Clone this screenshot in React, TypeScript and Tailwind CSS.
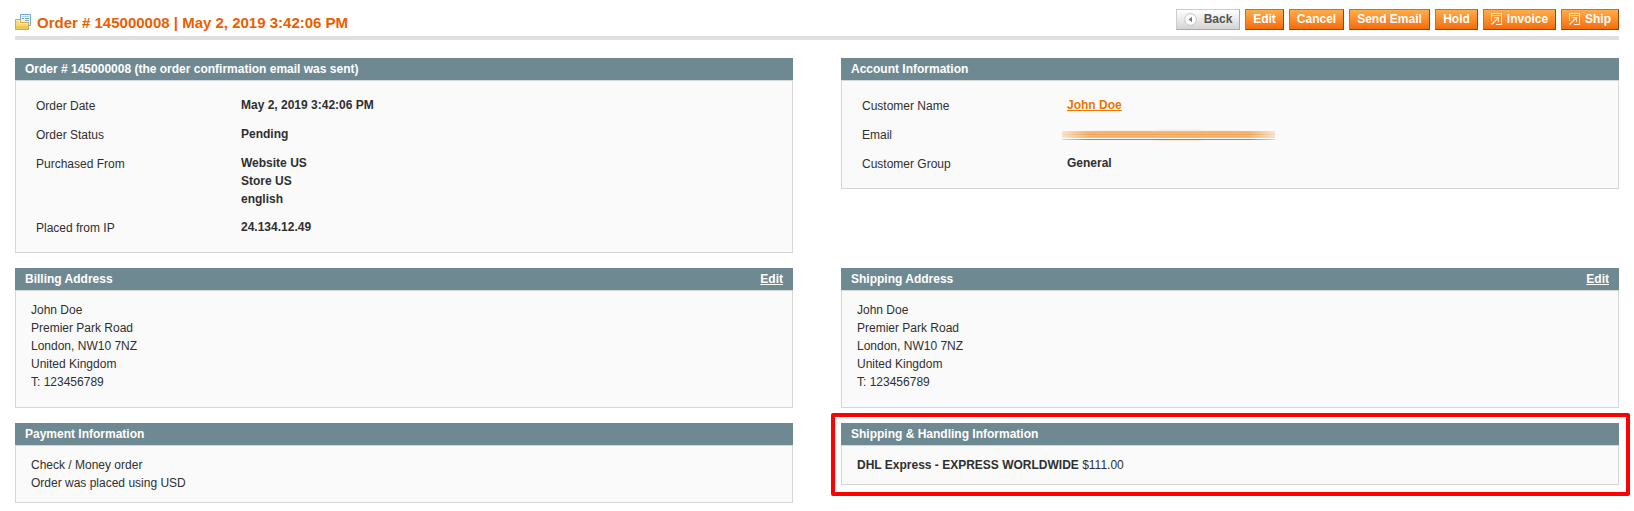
import type { ReactNode } from "react";

function Panel({ title, edit, className, children }: { title: string; edit?: boolean; className: string; children: ReactNode }) {
  return (
    <section>
      <div className="flex h-[22px] justify-between bg-[#6f8992] px-2.5 font-bold leading-[22px] text-white">
        <h4>{title}</h4>
        {edit && <a className="underline">Edit</a>}
      </div>
      <div className={`border border-[#d6d6d6] bg-[#fafafa] ${className}`}>{children}</div>
    </section>
  );
}

function Row({ label, children }: { label: string; children: ReactNode }) {
  return (
    <div className="flex pb-2.5">
      <div className="w-[205px] pt-px">{label}</div>
      <div className="font-bold">{children}</div>
    </div>
  );
}

function Button({ className, children }: { className: string; children: ReactNode }) {
  return (
    <button
      className={`flex h-[21px] items-center justify-center gap-[5px] border border-t-[#ed6502] border-r-[#a04300] border-b-[#a04300] border-l-[#ed6502] bg-linear-to-b from-[#ffac47] to-[#f56b05] pb-0.5 font-bold text-white ${className}`}
    >
      {children}
    </button>
  );
}

function PopIcon() {
  return (
    <svg width="11" height="12" viewBox="0 0 11 12" fill="none" stroke="#ffe9cc" shapeRendering="crispEdges" className="mt-px">
      <path d="M0.5 8V0.5H10.5V11.5H5M1 2.5H10" />
      <path d="M3 4.5H8M7.5 4V9" />
      <path d="M0.5 11.5L7 5" strokeWidth="1.4" shapeRendering="auto" />
    </svg>
  );
}

function OrderIcon() {
  return (
    <svg width="16" height="16" viewBox="0 0 16 16" className="mt-px">
      <path d="M5.5 0.5H15.5V11.5H5.5Z" fill="#e6f1fd" stroke="#7ba6dc" />
      <path d="M7 2.5H14" stroke="#a9cdf3" />
      <path d="M7 4.5H9M10 4.5H14" stroke="#76b15c" />
      <path d="M10 6.5H14M10 8.5H14" stroke="#7ba6dc" />
      <path d="M0.5 15.5V5.5H5.5V8.5H13.5V15.5Z" fill="#f8d673" stroke="#dba443" />
      <path d="M1.5 6.5H4.5V9.5H12.5" fill="none" stroke="#fff3c4" />
      <path d="M1 13.5H13" stroke="#f1c14f" strokeWidth="2" />
    </svg>
  );
}

function Address() {
  return (
    <>
      <p>John Doe</p>
      <p>Premier Park Road</p>
      <p>London, NW10 7NZ</p>
      <p>United Kingdom</p>
      <p>T: 123456789</p>
    </>
  );
}

export default function App() {
  return (
    <main className="h-[511px] overflow-hidden bg-white px-[15px] font-['Liberation_Sans',Arial,sans-serif] text-[12px] leading-[18px] text-[#2f2f2f]">
      <header className="flex h-10 justify-between border-b-4 border-[#dfdfdf]">
        <div className="flex gap-1.5 pt-[13px] text-[#eb5e00]">
          <OrderIcon />
          <h3 className="pt-px text-[15px] leading-[18px] font-bold">Order # 145000008 | May 2, 2019 3:42:06 PM</h3>
        </div>
        <div className="flex gap-[5px] pt-[9px]">
          <button className="flex h-[21px] w-16 items-center justify-center gap-[7px] border border-t-[#ccc] border-r-[#aaa] border-b-[#aaa] border-l-[#ccc] bg-linear-to-b from-white to-[#d4d4d4] pb-0.5 font-bold text-[#555]">
            <svg width="13" height="13" viewBox="0 0 13 13" className="mt-0.5">
              <circle cx="6.5" cy="6.5" r="5.8" fill="#fff" stroke="#c4c4c4" />
              <path d="M8 3.8V9.2L4.5 6.5Z" fill="#777" />
            </svg>
            Back
          </button>
          <Button className="w-[39px]">Edit</Button>
          <Button className="w-[55px]">Cancel</Button>
          <Button className="w-[81px]">Send Email</Button>
          <Button className="w-[43px]">Hold</Button>
          <Button className="w-[73px]"><PopIcon />Invoice</Button>
          <Button className="w-[58px]"><PopIcon />Ship</Button>
        </div>
      </header>

      <div className="grid grid-cols-2 items-start gap-x-12 gap-y-[15px] pt-[18px]">
        <Panel title="Order # 145000008 (the order confirmation email was sent)" className="h-[173px] px-5 pt-[15px]">
          <Row label="Order Date">May 2, 2019 3:42:06 PM</Row>
          <Row label="Order Status">Pending</Row>
          <Row label="Purchased From">
            <p>Website US</p>
            <p>Store US</p>
            <p>english</p>
          </Row>
          <Row label="Placed from IP">24.134.12.49</Row>
        </Panel>
        <Panel title="Account Information" className="h-[109px] px-5 pt-[15px]">
          <Row label="Customer Name"><a className="text-[#ea7601] underline">John Doe</a></Row>
          <Row label="Email">
            <svg width="213" height="12" viewBox="0 0 213 12" className="-ml-[5px] mt-1">
              <defs>
                <linearGradient id="smear">
                  <stop offset="0" stopColor="#ea7601" stopOpacity="0.3" />
                  <stop offset="0.13" stopColor="#ea7601" />
                  <stop offset="0.88" stopColor="#ea7601" />
                  <stop offset="1" stopColor="#ea7601" stopOpacity="0.3" />
                </linearGradient>
              </defs>
              <rect y="9" width="213" height="1" fill="#fff" />
              <g fill="url(#smear)">
                <rect x="92" y="0" width="50" height="1" opacity="0.08" />
                <rect x="30" y="1" width="150" height="1" opacity="0.08" />
                <rect y="2" width="213" height="7" opacity="0.5" />
                <rect y="3" width="213" height="1" opacity="0.12" />
                <rect y="5" width="213" height="1" opacity="0.35" />
                <rect y="7" width="213" height="1" opacity="0.12" />
                <rect y="10" width="213" height="1" />
                <rect x="92" y="11" width="50" height="1" opacity="0.15" />
              </g>
            </svg>
          </Row>
          <Row label="Customer Group">General</Row>
        </Panel>
        <Panel title="Billing Address" edit className="h-[118px] px-[15px] pt-2.5">
          <Address />
        </Panel>
        <Panel title="Shipping Address" edit className="h-[118px] px-[15px] pt-2.5">
          <Address />
        </Panel>
        <Panel title="Payment Information" className="h-[58px] px-[15px] pt-2.5">
          <p>Check / Money order</p>
          <p>Order was placed using USD</p>
        </Panel>
        <div className="relative">
          <Panel title="Shipping &amp; Handling Information" className="h-10 px-[15px] pt-2.5">
            <strong>DHL Express - EXPRESS WORLDWIDE</strong> $111.00
          </Panel>
          <div className="pointer-events-none absolute -top-2.5 -left-2.5 h-[83px] w-[799px] rounded-[2px] border-4 border-[#ff0000]" />
        </div>
      </div>
    </main>
  );
}
